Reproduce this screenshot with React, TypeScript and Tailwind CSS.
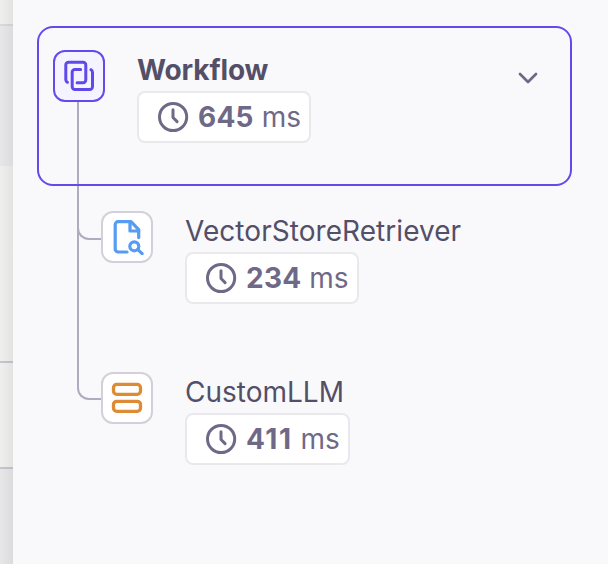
import type { ReactNode } from "react";

function ClockIcon() {
  return (
    <svg className="size-8 shrink-0" viewBox="0 0 32 32" fill="none" stroke="currentColor" strokeWidth="3" strokeLinecap="round" strokeLinejoin="round">
      <circle cx="16.1" cy="16" r="13.6" />
      <path d="M16 8.8v7.7l4.1 4.1" />
    </svg>
  );
}

function ChainIcon() {
  return (
    <svg className="size-8" viewBox="0 0 32 32" fill="none" stroke="#5f49ea" strokeWidth="3" strokeLinecap="round" strokeLinejoin="round">
      <path d="M4.4 22.3a3 3 0 0 1-1.6-2.6V4.9a2.7 2.7 0 0 1 2.7-2.7h14.6a2.7 2.7 0 0 1 2.7 2.7v15.2a2.7 2.7 0 0 1-2.7 2.7h-6" />
      <path d="M17.6 9.4h-5.7a2.7 2.7 0 0 0-2.7 2.7v14.7a2.7 2.7 0 0 0 2.7 2.7h14.9a2.7 2.7 0 0 0 2.7-2.7V12.4a3 3 0 0 0-1.6-2.7" />
    </svg>
  );
}

function RetrieverIcon() {
  return (
    <svg className="size-9" viewBox="0 0 36 36" fill="none" stroke="#559cf2" strokeWidth="3.2" strokeLinecap="round" strokeLinejoin="round">
      <path d="M18 33H9.2a3 3 0 0 1-3-3V5.7a3 3 0 0 1 3-3H22l7.7 7.9v8" />
      <path d="M21 3v9h8.7" />
      <circle cx="25.3" cy="27.3" r="4.5" />
      <path d="M28.8 30.7l4.3 4" />
    </svg>
  );
}

function ModelIcon() {
  return (
    <svg className="size-9" viewBox="0 0 36 36" fill="none" stroke="#dd8b35" strokeWidth="3.3">
      <rect x="4.5" y="4.4" width="27" height="9.9" rx="3.3" />
      <rect x="4.5" y="21.3" width="27" height="10" rx="3.3" />
    </svg>
  );
}

function Duration({ value, tracking = "tracking-[0.25px]" }: { value: string; tracking?: string }) {
  return (
    <div className="flex h-[52px] w-fit items-center rounded-lg border-2 border-[#e9e8ed] bg-white pr-2 pl-[18px] text-[#6f6988]">
      <ClockIcon />
      <span className="ml-[9px] text-[28px] leading-8 whitespace-pre">
        <b className={`font-bold ${tracking}`}>{value}</b> ms
      </span>
    </div>
  );
}

type ChildRunProps = {
  name: string;
  value: string;
  icon: ReactNode;
  connector: string;
  nameTracking?: string;
  valueTracking?: string;
};

function ChildRun({ name, value, icon, connector, nameTracking = "", valueTracking }: ChildRunProps) {
  return (
    <div className="relative flex h-[161px] pt-6 pl-16">
      <div className={`absolute left-10 w-[26px] rounded-bl-[12px] border-b-2 border-l-2 border-[#afabc0] ${connector}`} />
      <div className="relative flex size-[52px] shrink-0 items-center justify-center rounded-[12px] border-2 border-[#d2d0da] bg-white">
        {icon}
      </div>
      <div className="ml-8">
        <div className={`h-[41px] text-[28px] leading-10 text-[#544f68] ${nameTracking}`}>{name}</div>
        <Duration value={value} tracking={valueTracking} />
      </div>
    </div>
  );
}

export default function App() {
  return (
    <div className="flex h-[564px] w-[608px] overflow-hidden bg-[#f9f9fb] font-[Inter,sans-serif]">
      <aside className="relative flex w-[13px] shrink-0 flex-col bg-[#efefee]">
        <div className="h-[26px] border-b-2 border-[#d8d8dd]" />
        <div className="h-[140px] bg-[#e7e7e9]" />
        <div className="h-[197px] border-b-2 border-[#c6c5ce]" />
        <div className="h-[106px] border-b-2 border-[#c6c5ce]" />
        <div className="flex-1 bg-[#e7e7ea]" />
        <div className="absolute inset-0 bg-linear-to-r from-transparent to-black/5" />
      </aside>
      <main className="flex-1 pt-[26px] pr-9 pl-6">
        <div className="relative mb-px flex h-40 rounded-[16px] border-2 border-[#624bed] pt-[22px] pl-[14px]">
          <div className="absolute top-[74px] left-[38px] h-[82px] w-0.5 bg-[#afabc0]" />
          <div className="flex size-[52px] shrink-0 items-center justify-center rounded-[12px] border-2 border-[#624bed] bg-[#f5f3ff]">
            <ChainIcon />
          </div>
          <div className="ml-8">
            <div className="h-[41px] text-[28px] leading-10 font-bold tracking-[-0.12px] text-[#544f68]">Workflow</div>
            <Duration value="645" />
          </div>
          <svg className="mt-[15px] mr-[30px] ml-auto size-6" viewBox="0 0 24 24" fill="none" stroke="#6f6988" strokeWidth="2.7" strokeLinecap="round" strokeLinejoin="round">
            <path d="M4 9l8 8 8-8" />
          </svg>
        </div>
        <ChildRun
          name="VectorStoreRetriever"
          nameTracking="tracking-[0.05px]"
          value="234"
          icon={<RetrieverIcon />}
          connector="-top-px h-[54px]"
        />
        <ChildRun
          name="CustomLLM"
          value="411"
          valueTracking="tracking-[1.5px]"
          icon={<ModelIcon />}
          connector="-top-[162px] h-[214px]"
        />
      </main>
    </div>
  );
}
